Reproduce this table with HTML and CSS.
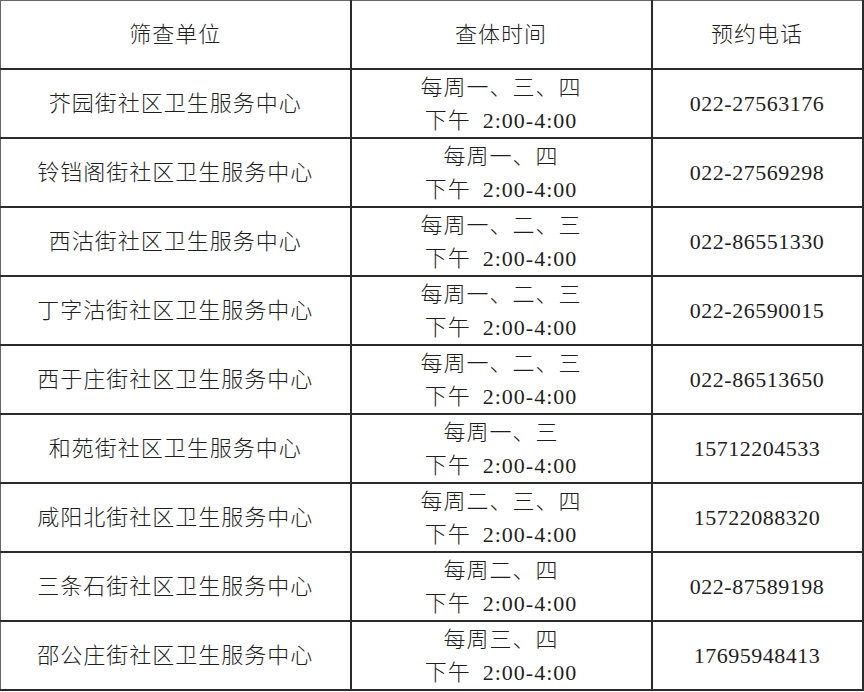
FILE: index.html
```html
<!DOCTYPE html>
<html lang="zh-CN">
<head>
<meta charset="utf-8">
<link rel="stylesheet" href="styles.css">
</head>
<body>
<table class="sched">
  <colgroup>
    <col class="c-unit">
    <col class="c-time">
    <col class="c-phone">
  </colgroup>
  <thead>
    <tr><th>筛查单位</th><th>查体时间</th><th>预约电话</th></tr>
  </thead>
  <tbody>
    <tr><td>芥园街社区卫生服务中心</td><td><div>每周一、三、四</div><div>下午&ensp;2:00-4:00</div></td><td class="num">022-27563176</td></tr>
    <tr><td>铃铛阁街社区卫生服务中心</td><td><div>每周一、四</div><div>下午&ensp;2:00-4:00</div></td><td class="num">022-27569298</td></tr>
    <tr><td>西沽街社区卫生服务中心</td><td><div>每周一、二、三</div><div>下午&ensp;2:00-4:00</div></td><td class="num">022-86551330</td></tr>
    <tr><td>丁字沽街社区卫生服务中心</td><td><div>每周一、二、三</div><div>下午&ensp;2:00-4:00</div></td><td class="num">022-26590015</td></tr>
    <tr><td>西于庄街社区卫生服务中心</td><td><div>每周一、二、三</div><div>下午&ensp;2:00-4:00</div></td><td class="num">022-86513650</td></tr>
    <tr><td>和苑街社区卫生服务中心</td><td><div>每周一、三</div><div>下午&ensp;2:00-4:00</div></td><td class="num">15712204533</td></tr>
    <tr><td>咸阳北街社区卫生服务中心</td><td><div>每周二、三、四</div><div>下午&ensp;2:00-4:00</div></td><td class="num">15722088320</td></tr>
    <tr><td>三条石街社区卫生服务中心</td><td><div>每周二、四</div><div>下午&ensp;2:00-4:00</div></td><td class="num">022-87589198</td></tr>
    <tr><td>邵公庄街社区卫生服务中心</td><td><div>每周三、四</div><div>下午&ensp;2:00-4:00</div></td><td class="num">17695948413</td></tr>
  </tbody>
</table>
</body>
</html>
```
FILE: styles.css
```css
html, body {
  margin: 0;
  padding: 0;
  background: #ffffff;
}
body {
  font-family: "Liberation Serif", "Noto Sans CJK SC", serif;
  color: #1e1e1e;
  font-size: 22px;
  font-weight: 300;
}
.sched {
  border-collapse: collapse;
  table-layout: fixed;
  width: 862px;
  margin: 0;
}
.c-unit { width: 350px; }
.c-time { width: 301px; }
.c-phone { width: 211px; }
.sched th,
.sched td {
  border: 2px solid #2b2b2b;
  height: 67px;
  padding: 0;
  text-align: center;
  vertical-align: middle;
  font-weight: 300;
  letter-spacing: 1px;
  line-height: 33px;
}
.sched td.num {
  letter-spacing: 0.5px;
  font-size: 22px;
}
.sched thead tr th {
  border-top-width: 1px;
  border-top-color: #666;
}
.sched tr > :first-child {
  border-left-width: 1px;
  border-left-color: #666;
}
```
